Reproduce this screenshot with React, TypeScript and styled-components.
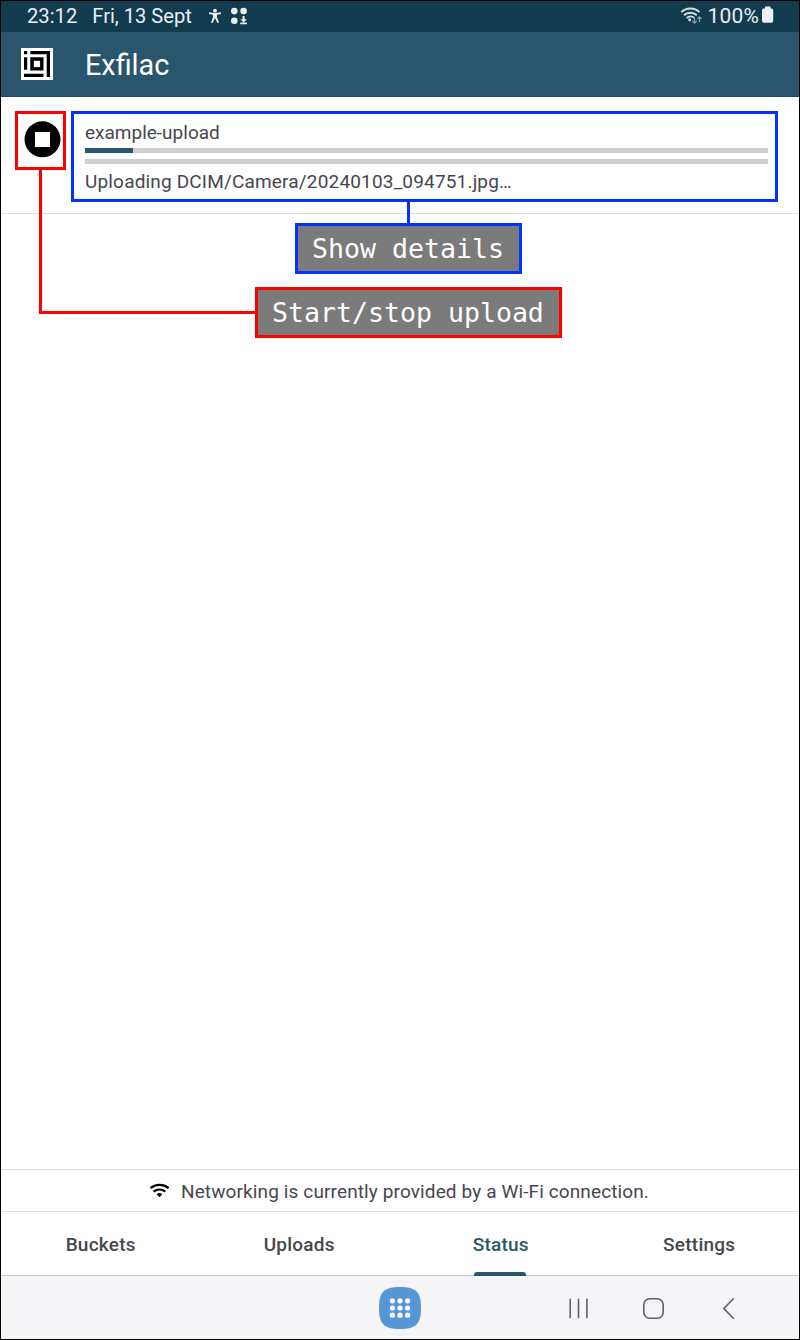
import React from "react";
import styled, { createGlobalStyle } from "styled-components";

const GlobalStyle = createGlobalStyle`
  * { box-sizing: border-box; }
  body { margin: 0; font-family: Roboto, "Liberation Sans", sans-serif; }
`;

const Screen = styled.div`
  position: relative;
  display: flex;
  flex-direction: column;
  width: 800px;
  height: 1340px;
  border: 1px solid #000;
  background: #fff;
  color: #47464f;
  overflow: hidden;
  white-space: nowrap;
`;

const StatusBar = styled.div`
  display: flex;
  align-items: center;
  height: 31px;
  padding: 0 25px 0 26px;
  background: #133b50;
  color: #e9eef1;
  font-size: 20px;
`;

const StatusText = styled.span<{ $spacing?: number; $gap?: number; $size?: number }>`
  font-size: ${(p) => p.$size ?? 20.2}px;
  letter-spacing: ${(p) => p.$spacing ?? 0}px;
  margin-right: ${(p) => p.$gap ?? 0}px;
  line-height: 28px;
  padding-bottom: 2px;
`;

const Spacer = styled.div`
  flex: 1;
`;

const AppBar = styled.header`
  display: flex;
  align-items: center;
  gap: 32px;
  height: 65px;
  padding: 0 20px;
  background: #29566c;
  border-bottom: 1px solid #234b62;
  color: #fff;
`;

const AppTitle = styled.h1`
  margin: 2px 0 0;
  font-size: 28.8px;
  font-weight: 400;
`;

const UploadRow = styled.section`
  display: flex;
  height: 117px;
  padding: 14px 31px 0 23px;
  border-bottom: 1px solid #dedede;
`;

const StopButton = styled.button`
  display: flex;
  width: 37px;
  height: 37px;
  margin: 10px 24px 0 0;
  padding: 0;
  border: 0;
  background: none;
`;

const UploadInfo = styled.div`
  flex: 1;
  display: flex;
  flex-direction: column;
`;

const Line = styled.div<{ $spacing: number }>`
  height: 24px;
  line-height: 24px;
  font-size: 19px;
  letter-spacing: ${(p) => p.$spacing}px;
`;

const UploadName = styled(Line)`
  margin: 10px 0 3px;
`;

const ProgressGroup = styled.div`
  display: flex;
  flex-direction: column;
  gap: 6px;
`;

const UploadState = styled(Line)`
  margin-top: 6px;
`;

const Progress = styled.div`
  height: 5px;
  background: #cfcfd1;
`;

const ProgressFill = styled.div`
  width: 48px;
  height: 5px;
  background: #29566c;
`;

const Content = styled.main`
  flex: 1;
`;

const NetworkBar = styled.div`
  display: flex;
  align-items: center;
  height: 42px;
  padding-left: 148px;
  border-top: 1px solid #dedede;
`;

const NetworkText = styled(Line)`
  margin: 3px 0 0 12px;
`;

const Tabs = styled.nav`
  display: grid;
  grid-template-columns: repeat(4, 1fr);
  height: 65px;
  border-top: 1px solid #dedede;
  border-bottom: 1px solid #c6c5d0;
`;

const Tab = styled.div<{ $shift?: number; $active?: boolean }>`
  position: relative;
  display: flex;
  align-items: center;
  justify-content: center;
  padding: 2px ${(p) => Math.max(0, -(p.$shift ?? 0))}px 0 ${(p) => Math.max(0, p.$shift ?? 0)}px;
  font-size: 19px;
  font-weight: 500;
  letter-spacing: 0.25px;
  color: ${(p) => (p.$active ? "#29566c" : "#47464f")};
`;

const TabIndicator = styled.span`
  position: absolute;
  bottom: -1px;
  left: 74px;
  width: 52px;
  height: 4px;
  border-radius: 3px 3px 0 0;
  background: #29566c;
`;

const SystemNav = styled.footer`
  display: flex;
  height: 63px;
  padding: 10px 0 0 377px;
  background: #f5f5f8;
`;

const Overlay = styled.div`
  position: absolute;
  inset: -1px;
  pointer-events: none;
`;

interface Area {
  $color: string;
  $x: number;
  $y: number;
  $w: number;
  $h: number;
}

const Box = styled.div<Area>`
  position: absolute;
  left: ${(p) => p.$x}px;
  top: ${(p) => p.$y}px;
  width: ${(p) => p.$w}px;
  height: ${(p) => p.$h}px;
  border: 3px solid ${(p) => p.$color};
`;

const Callout = styled(Box)`
  display: flex;
  align-items: center;
  padding: 0 0 1px 14px;
  background: #7b7b7b;
  color: #fff;
  font-family: "DejaVu Sans Mono", monospace;
  font-size: 26.57px;
`;

const Connector = styled.div<Area>`
  position: absolute;
  left: ${(p) => p.$x}px;
  top: ${(p) => p.$y}px;
  width: ${(p) => p.$w}px;
  height: ${(p) => p.$h}px;
  background: ${(p) => p.$color};
`;

const BLUE = "#0033ff";
const RED = "#ff0000";

const StatusIcons = () => (
  <svg width="48" height="31" viewBox="205 1 48 31" fill="#e9eef1">
    <circle cx="215" cy="10.7" r="1.9" />
    <path d="M209 12.300q6 1.200 12 0v1.600l-4 .8v2.700l2.100 5.100-1.700.6-2.400-5-2.400 5-1.700-.6 2.100-5.100v-2.700l-4-.8z" />
    <circle cx="234.300" cy="11.100" r="3.300" />
    <circle cx="243.600" cy="11.100" r="3.300" />
    <circle cx="234.300" cy="20.700" r="3.300" />
    <path d="M242.600 16h2v3.300h2.300l-3.300 3.300-3.300-3.300h2.300zM240.300 22.600h6.600v1.600h-6.600z" />
  </svg>
);

const StatusWifi = () => (
  <svg width="27" height="31" viewBox="680 1 27 31" fill="none" stroke="#d5dfe4" strokeWidth="1.9">
    <path d="M681.300 12.200c5-5 13.200-5 18.200 0M684 15.300c3.600-3.400 9.200-3.400 12.800 0M686.700 18c2.200-2 5.400-2 7.400-.2" />
    <circle cx="689.600" cy="19.800" r="1.500" fill="#d5dfe4" stroke="none" />
    <path d="M694.500 17.500v5.400M692.300 21l2.200 2 2.200-2M699.500 22v-5.200M697.300 18.800l2.200-2 2.200 2" stroke="#849ca8" strokeWidth="1.300" />
  </svg>
);

const Battery = () => (
  <svg width="12" height="31" viewBox="762 1 12 31">
    <path d="M765 8.500V7.200q0-.7.7-.7h4.200q.7 0 .7.7v1.300h.9q1.700 0 1.700 1.700V21q0 1.700-1.700 1.700h-7.800Q762 22.700 762 21V10.200q0-1.700 1.700-1.700z" fill="#edf1f3" />
  </svg>
);

const Logo = () => (
  <svg width="32" height="32" viewBox="0 0 32 32">
    <path d="M0 0h32v32H0z" fill="#fff" />
    <path d="M3 3h3.200v3.200H3zM9.300 3H29v26h-3.300V6.200H9.300zM3 9.300h3.200v12.500H3zM9.300 9.300h13.200v13.200H9.300zM3 25.700h19.500V29H3z" fill="#000" />
    <path d="M12.800 12.800h6.300v6.300h-6.300z" fill="#fff" />
  </svg>
);

const Wifi = () => (
  <svg width="20" height="15" viewBox="149 1183 20 15" fill="none" stroke="#000" strokeWidth="2.200">
    <path d="M150.400 1188.100c5.100-4.400 13.100-4.400 18.200 0M153.700 1191.600c3.400-2.800 8.200-2.800 11.600 0" />
    <path d="M156.600 1194.300q2.900-2.400 5.800 0l-2.900 3z" fill="#000" stroke="none" />
  </svg>
);

const columns = [392.4, 400, 407.6];
const rows = [1300.8, 1308, 1315.2];

const NavIcons = () => (
  <svg width="370" height="44" viewBox="378 1286 370 44">
    <path d="M400 1287c16 0 21 5 21 21s-5 21-21 21-21-5-21-21 5-21 21-21z" fill="#5596d5" />
    {columns.map((x) => rows.map((y) => <circle key={`${x}-${y}`} cx={x} cy={y} r="2.600" fill="#fff" />))}
    <g fill="none" stroke="#606063" strokeWidth="1.600">
      <path d="M570.200 1298.700v19.500M578.500 1298.700v19.500M586.900 1298.700v19.500M733.800 1298.300l-10 10.200 10 10.300" />
      <rect x="643.800" y="1298.800" width="19.400" height="19.400" rx="6" />
    </g>
  </svg>
);

export default function App() {
  return (
    <Screen>
      <GlobalStyle />
      <StatusBar>
        <StatusText $gap={15}>23:12</StatusText>
        <StatusText $gap={13} $size={20.1}>Fri, 13 Sept</StatusText>
        <StatusIcons />
        <Spacer />
        <StatusWifi />
        <StatusText $gap={3} $size={21} $spacing={0.2}>100%</StatusText>
        <Battery />
      </StatusBar>
      <AppBar>
        <Logo />
        <AppTitle>Exfilac</AppTitle>
      </AppBar>
      <UploadRow>
        <StopButton aria-label="Stop upload">
          <svg width="37" height="37" viewBox="0 0 37 37">
            <circle cx="18.500" cy="18.300" r="18" fill="#000" />
            <path d="M11 11h15v15H11z" fill="#fff" />
          </svg>
        </StopButton>
        <UploadInfo>
          <UploadName $spacing={0}>example-upload</UploadName>
          <ProgressGroup>
            <Progress>
              <ProgressFill />
            </Progress>
            <Progress />
          </ProgressGroup>
          <UploadState $spacing={0.17}>Uploading DCIM/Camera/20240103_094751.jpg…</UploadState>
        </UploadInfo>
      </UploadRow>
      <Content />
      <NetworkBar>
        <Wifi />
        <NetworkText $spacing={0.12}>Networking is currently provided by a Wi-Fi connection.</NetworkText>
      </NetworkBar>
      <Tabs>
        <Tab>Buckets</Tab>
        <Tab $shift={-2}>Uploads</Tab>
        <Tab $active $shift={2}>
          Status
          <TabIndicator />
        </Tab>
        <Tab>Settings</Tab>
      </Tabs>
      <SystemNav>
        <NavIcons />
      </SystemNav>
      <Overlay>
        <Box $color={RED} $x={15} $y={111} $w={51} $h={59} />
        <Box $color={BLUE} $x={71} $y={111} $w={707} $h={91} />
        <Connector $color={BLUE} $x={407} $y={202} $w={3} $h={21} />
        <Connector $color={RED} $x={39} $y={170} $w={3} $h={144} />
        <Connector $color={RED} $x={39} $y={311} $w={216} $h={3} />
        <Callout $color={BLUE} $x={295} $y={223} $w={227} $h={51}>Show details</Callout>
        <Callout $color={RED} $x={255} $y={287} $w={307} $h={51}>Start/stop upload</Callout>
      </Overlay>
    </Screen>
  );
}
